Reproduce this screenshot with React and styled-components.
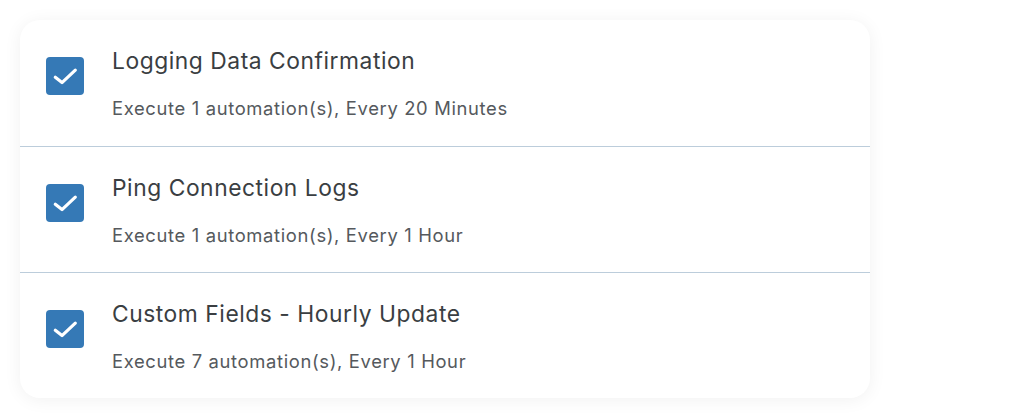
import React from "react";
import styled, { createGlobalStyle } from "styled-components";

const Global = createGlobalStyle`
  html, body { margin: 0; padding: 0; background: #ffffff; }
  body { font-family: Inter, "Noto Sans", sans-serif; -webkit-font-smoothing: antialiased; }
`;

const Page = styled.div`
  padding: 20px;
  width: 1015px;
  box-sizing: border-box;
`;

const Card = styled.ul`
  list-style: none;
  margin: 0;
  padding: 0;
  width: 850px;
  background: #fff;
  border-radius: 20px;
  box-shadow: 0 2px 18px rgba(0, 0, 0, 0.06);
  overflow: hidden;
`;

const Row = styled.li`
  display: flex;
  align-items: flex-start;
  gap: 28px;
  height: 126px;
  box-sizing: border-box;
  padding: 37px 26px 0;
  & + & { border-top: 1px solid #bccddb; }
`;

const Box = styled.span`
  flex: none;
  width: 38px;
  height: 38px;
  border-radius: 4px;
  background: ${(p) => (p.$checked ? "#3579b6" : "#fff")};
  display: flex;
  align-items: center;
  justify-content: center;
`;

const Text = styled.div`
  display: flex;
  flex-direction: column;
  gap: 22px;
  margin-top: -10px;
`;

const Title = styled.div`
  font-size: 22.8px;
  line-height: 28px;
  letter-spacing: 0.55px;
  color: #3a3e42;
`;

const Sub = styled.div`
  font-size: 18.4px;
  line-height: 22px;
  letter-spacing: 0.65px;
  color: #55595d;
`;

const Check = () => (
  <svg width="38" height="38" viewBox="0 0 38 38" fill="none">
    <path d="M9.3 20.3 L16 25.6 L29.3 13.2" stroke="#fff" strokeWidth="3.2" strokeLinecap="round" strokeLinejoin="round" />
  </svg>
);

const items = [
  { title: "Logging Data Confirmation", sub: "Execute 1 automation(s), Every 20 Minutes" },
  { title: "Ping Connection Logs", sub: "Execute 1 automation(s), Every 1 Hour" },
  { title: "Custom Fields - Hourly Update", sub: "Execute 7 automation(s), Every 1 Hour" },
];

export default function App() {
  return (
    <Page>
      <Global />
      <Card>
        {items.map((it) => (
          <Row key={it.title}>
            <Box $checked>
              <Check />
            </Box>
            <Text>
              <Title>{it.title}</Title>
              <Sub>{it.sub}</Sub>
            </Text>
          </Row>
        ))}
      </Card>
    </Page>
  );
}
